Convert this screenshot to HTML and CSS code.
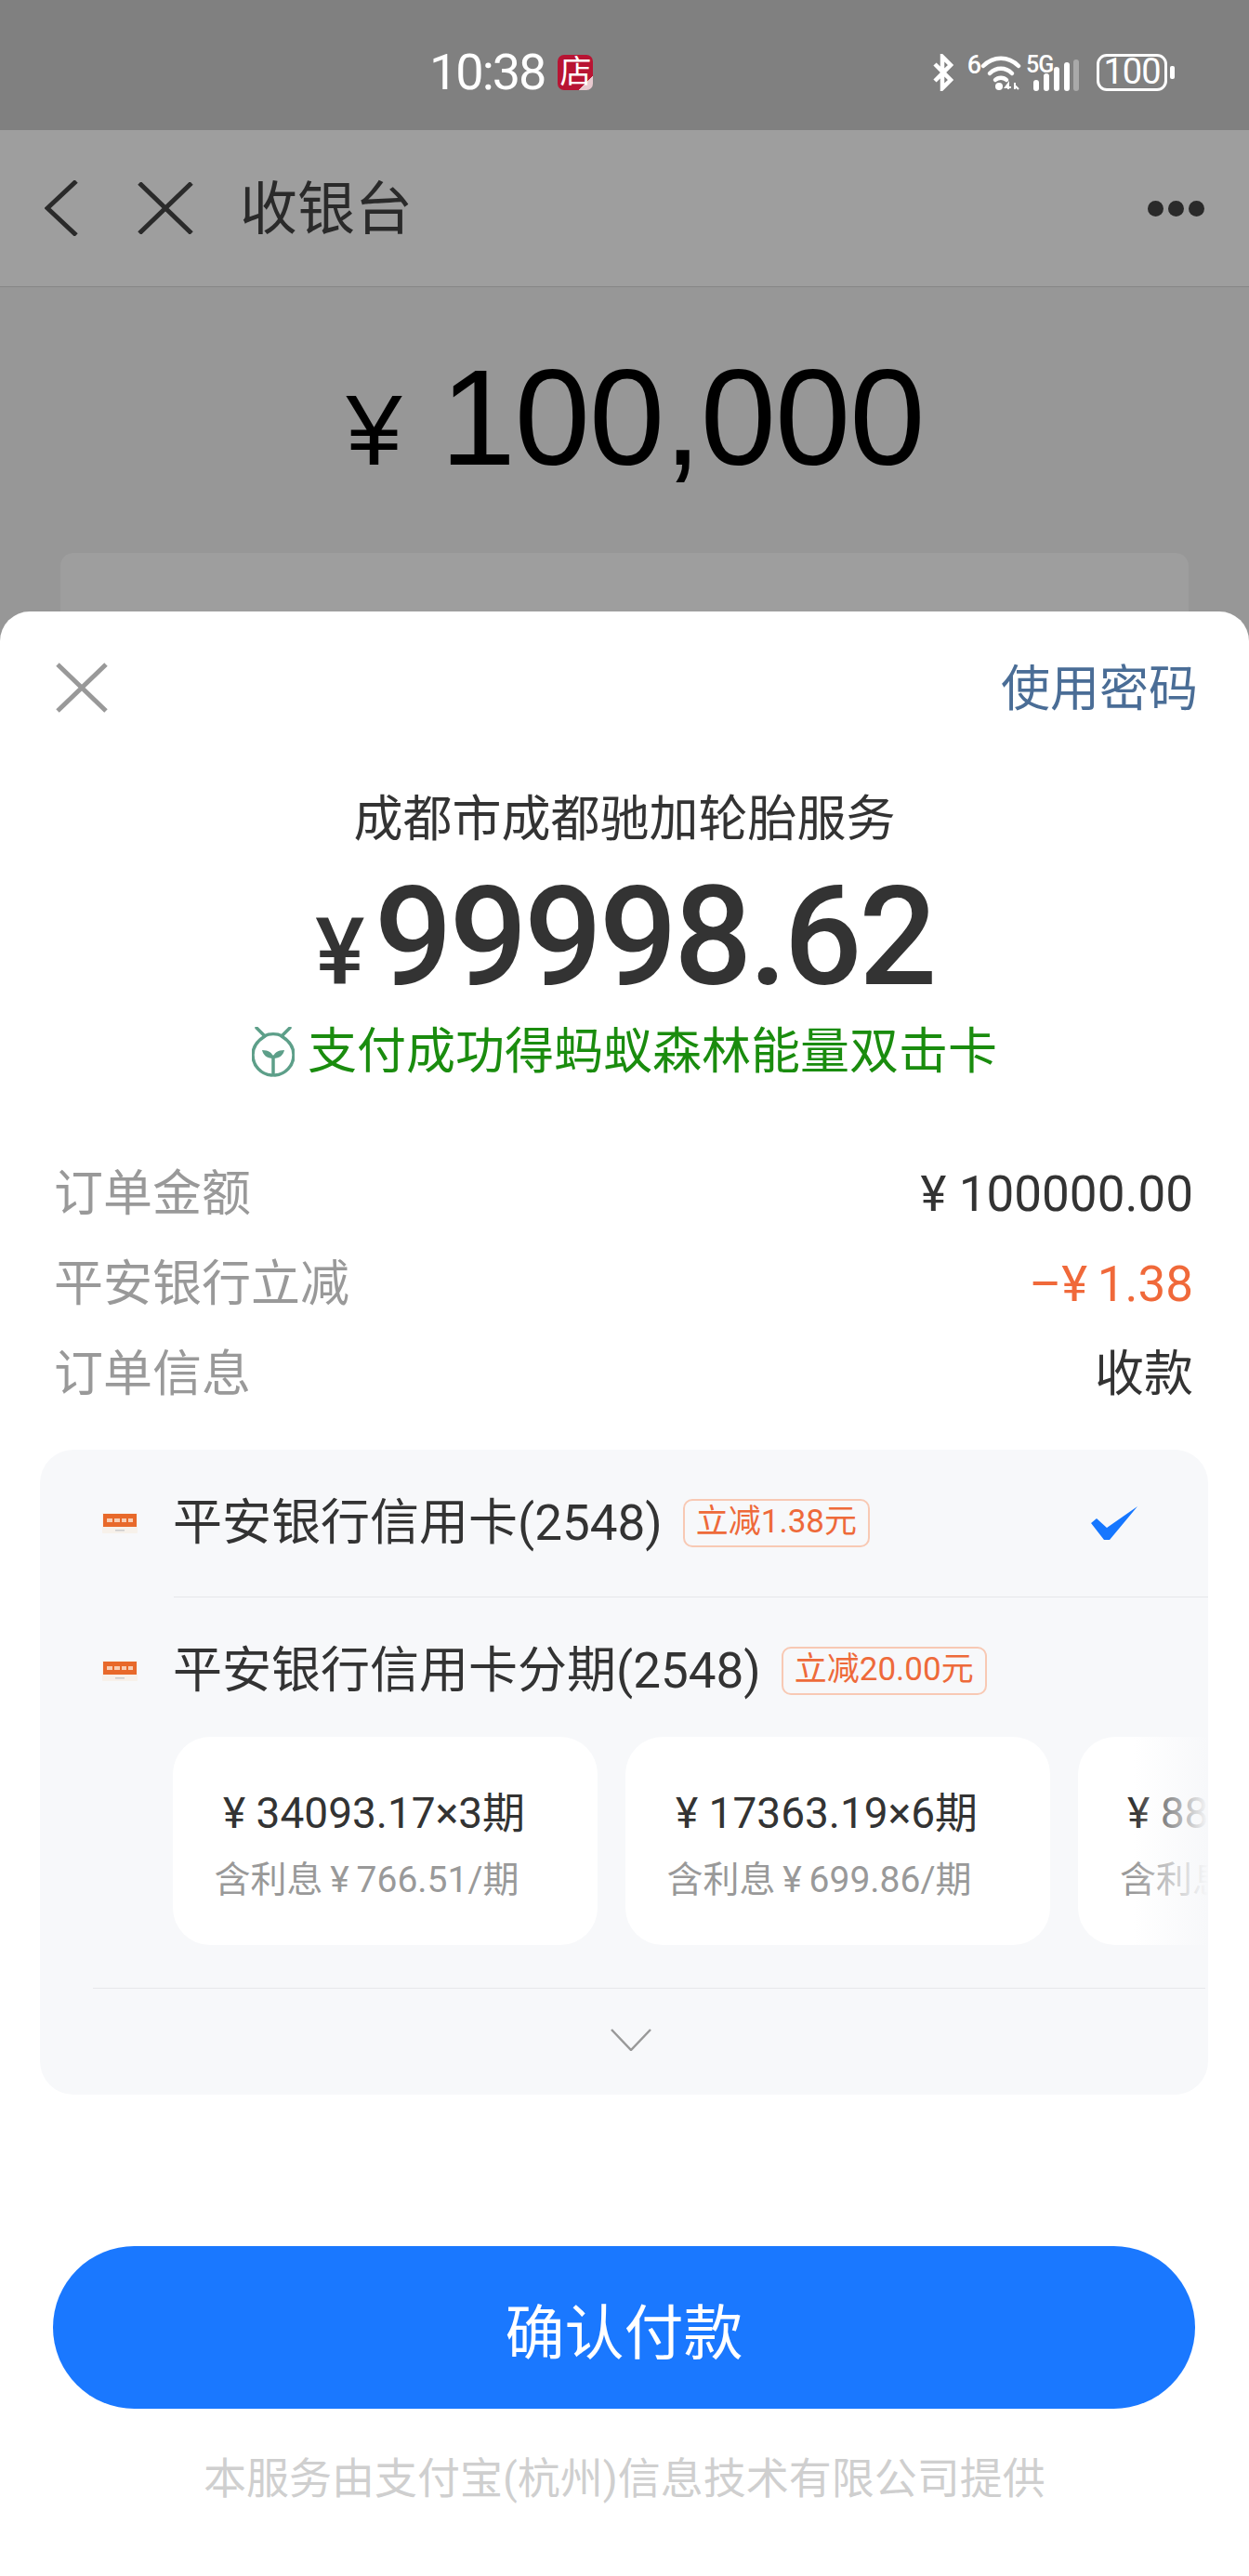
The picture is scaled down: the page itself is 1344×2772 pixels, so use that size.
FILE: index.html
```html
<!DOCTYPE html>
<html lang="zh-CN">
<head>
    <meta charset="UTF-8">
    <title>收银台</title>
    <link rel="stylesheet" href="styles.css">
</head>
<body>
<div class="page">
    <header class="status-bar">
        <div class="status-center">
            <span class="status-time">10:38</span>
            <span class="store-badge">店</span>
        </div>
        <div class="status-icons">
            <svg class="icon-bt" viewBox="0 0 26 40" width="26" height="40"><path d="M4 11 L21 28 L12 37 V3 L21 12 L4 29" fill="none" stroke="#fff" stroke-width="4.5"/></svg>
            <span class="wifi-gen">6</span>
            <svg class="icon-wifi" viewBox="0 0 44 38" width="44" height="38"><g fill="none" stroke="#fff" stroke-width="4.5" stroke-linecap="round"><path d="M3 12 C14 1 30 1 41 12"/><path d="M10 20 C17 13 27 13 34 20"/><path d="M16 27 C19 24 25 24 28 27"/></g><circle cx="20" cy="34" r="4" fill="#fff"/><path d="M30 37 L30 31 L27 35 H33 M37 30 V37 M37 33 L41 37" fill="none" stroke="#fff" stroke-width="2"/></svg>
            <div class="signal">
                <span class="signal-gen">5G</span>
                <svg viewBox="0 0 50 34" width="50" height="34"><g stroke="#fff" stroke-width="6" stroke-linecap="round"><path d="M3 25 V31"/><path d="M14 18 V31"/><path d="M25 11 V31"/><path d="M36 6 V31"/></g><path d="M46 3 V31" stroke="#a9a9a9" stroke-width="6" stroke-linecap="round"/></svg>
            </div>
            <div class="battery"><span class="battery-level">100</span></div>
            <span class="battery-nub"></span>
        </div>
    </header>

    <nav class="top-nav">
        <svg class="nav-back" viewBox="0 0 36 60" width="36" height="60"><path d="M34 1 L3 30 L34 59" fill="none" stroke="#2a2a2a" stroke-width="5"/></svg>
        <svg class="nav-close" viewBox="0 0 60 56" width="60" height="56"><path d="M2 1 L58 55 M58 1 L2 55" fill="none" stroke="#2a2a2a" stroke-width="5"/></svg>
        <span class="nav-title">收银台</span>
        <div class="nav-more"><i></i><i></i><i></i></div>
    </nav>

    <section class="behind">
        <div class="behind-amount"><span class="behind-yen">¥</span><span>100,000</span></div>
        <div class="behind-card"></div>
    </section>

    <div class="sheet">
        <div class="sheet-head">
            <svg viewBox="0 0 56 54" width="56" height="54"><path d="M2 2 L54 52 M54 2 L2 52" fill="none" stroke="#999" stroke-width="5"/></svg>
            <a class="use-password">使用密码</a>
        </div>

        <div class="merchant">成都市成都驰加轮胎服务</div>
        <div class="pay-amount"><span class="pay-yen">¥</span>99998.62</div>
        <div class="forest">
            <svg viewBox="0 0 46 54" width="46" height="54"><g fill="none" stroke="#5d9f89" stroke-width="3.5" stroke-linecap="round"><path d="M14 10 C6 15 1 22 1 30 C1 42 10 51 21 52"/><path d="M32 10 C40 15 45 22 45 30 C45 42 36 51 25 52"/><path d="M13 10 C19 7 27 7 33 10"/><path d="M5 1 L13 9"/><path d="M41 1 L33 9"/><path d="M23 52 V32"/></g><path d="M23 34 C16 34 12 30 11 25 C18 25 23 28 23 34 Z M23 34 C30 34 34 30 35 25 C28 25 23 28 23 34 Z" fill="#5d9f89"/></svg>
            <span>支付成功得蚂蚁森林能量双击卡</span>
        </div>

        <dl class="details">
            <div class="detail-row"><dt>订单金额</dt><dd><span class="yen">¥</span>100000.00</dd></div>
            <div class="detail-row"><dt>平安银行立减</dt><dd class="discount">–¥<span class="yen"></span>1.38</dd></div>
            <div class="detail-row"><dt>订单信息</dt><dd>收款</dd></div>
        </dl>

        <div class="methods">
            <div class="method">
                <svg class="bank-icon" viewBox="0 0 38 22" width="38" height="22"><rect width="38" height="22" rx="1" fill="#f7f1ea"/><rect x="1" y="1" width="36" height="14" fill="#e8692a"/><path d="M5 6 h6 v4 h-6 z M13 6 h6 v4 h-6 z M21 6 h5 v4 h-5 z M28 6 h5 v4 h-5 z" fill="#f8cdb2"/><rect x="14" y="18" width="10" height="1.5" fill="#ccc"/></svg>
                <span class="method-name">平安银行信用卡(2548)</span>
                <span class="promo">立减1.38元</span>
                <svg class="method-check" viewBox="0 0 50 36" width="50" height="36"><path d="M0 18 L6 13 L17 23 L50 0 L20 36 H14 Z" fill="#1677ff"/></svg>
            </div>
            <div class="method-line"></div>
            <div class="method method-plans">
                <svg class="bank-icon" viewBox="0 0 38 22" width="38" height="22"><rect width="38" height="22" rx="1" fill="#f7f1ea"/><rect x="1" y="1" width="36" height="14" fill="#e8692a"/><path d="M5 6 h6 v4 h-6 z M13 6 h6 v4 h-6 z M21 6 h5 v4 h-5 z M28 6 h5 v4 h-5 z" fill="#f8cdb2"/><rect x="14" y="18" width="10" height="1.5" fill="#ccc"/></svg>
                <span class="method-name">平安银行信用卡分期(2548)</span>
                <span class="promo">立减20.00元</span>
            </div>
            <div class="plans">
                <div class="plan">
                    <div class="plan-main"><span class="yen">¥</span>34093.17×3期</div>
                    <div class="plan-sub">含利息<span class="plan-sub-yen">¥</span>766.51/期</div>
                </div>
                <div class="plan">
                    <div class="plan-main"><span class="yen">¥</span>17363.19×6期</div>
                    <div class="plan-sub">含利息<span class="plan-sub-yen">¥</span>699.86/期</div>
                </div>
                <div class="plan plan-clipped">
                    <div class="plan-main"><span class="yen">¥</span>88</div>
                    <div class="plan-sub">含利息</div>
                </div>
                <div class="plans-fade"></div>
            </div>
            <div class="plans-line"></div>
            <div class="methods-more">
                <svg viewBox="0 0 44 24" width="44" height="24"><path d="M1 1 L22 23 L43 1" fill="none" stroke="#999" stroke-width="2.5"/></svg>
            </div>
        </div>

        <button class="confirm">确认付款</button>
        <div class="provider">本服务由支付宝(杭州)信息技术有限公司提供</div>
    </div>
</div>
</body>
</html>
```

FILE: styles.css
```css
* {
    box-sizing: border-box;
}

body {
    font-family: Roboto, "Noto Sans CJK SC", sans-serif;
    margin: 0;
}

.page {
    background: #979797;
    height: 2772px;
    overflow: hidden;
    position: relative;
    width: 1344px;
}

/* status bar */
.status-bar {
    align-items: center;
    background: #808080;
    color: #fff;
    display: flex;
    height: 140px;
    padding: 16px 80px 0 462px;
}

.status-center {
    align-items: center;
    display: flex;
    gap: 14px;
}

.status-time {
    font-size: 54px;
    letter-spacing: -2px;
    line-height: 60px;
}

.store-badge {
    background: linear-gradient(135deg, #b81433 80%, #e8c9cf 80%);
    border-radius: 7px;
    font-size: 34px;
    height: 38px;
    line-height: 36px;
    text-align: center;
    width: 38px;
}

.status-icons {
    align-items: center;
    display: flex;
    margin-left: auto;
    position: relative;
}

.icon-bt {
    margin-right: 13px;
}

.wifi-gen {
    align-self: flex-start;
    font-size: 27px;
    font-weight: 500;
    letter-spacing: -1px;
    line-height: 24px;
}

.signal {
    height: 40px;
    margin-left: 13px;
    position: relative;
    width: 50px;
}

.signal svg {
    bottom: 0;
    left: 0;
    position: absolute;
}

.signal-gen {
    font-size: 25px;
    font-weight: 500;
    left: -8px;
    letter-spacing: -1px;
    line-height: 24px;
    position: absolute;
    top: 0;
}

.battery {
    border: 3.5px solid #fff;
    border-radius: 11px;
    height: 40px;
    margin-left: 18px;
    text-align: center;
    width: 76px;
}

.battery-level {
    display: block;
    font-size: 38px;
    letter-spacing: -1px;
    line-height: 33px;
}

.battery-nub {
    background: #fff;
    border-radius: 2px;
    height: 14px;
    margin-left: 3px;
    width: 5px;
}

/* page behind the sheet */
.top-nav {
    align-items: center;
    background: #9e9e9e;
    border-bottom: 1px solid #868686;
    display: flex;
    height: 169px;
    padding: 0 48px;
}

.nav-close {
    margin-left: 64px;
}

.nav-title {
    color: #2a2a2a;
    font-size: 62px;
    margin-bottom: 9px;
    margin-left: 50px;
}

.nav-more {
    display: flex;
    gap: 5px;
    margin-left: auto;
}

.nav-more i {
    background: #2a2a2a;
    border-radius: 50%;
    height: 17px;
    width: 17px;
}

.behind {
    padding: 56px 65px 0 88px;
}

.behind-amount {
    align-items: baseline;
    color: #000;
    display: flex;
    font-family: "Liberation Sans", sans-serif;
    font-size: 146px;
    justify-content: center;
    letter-spacing: -1px;
    line-height: 170px;
}

.behind-yen {
    font-size: 108px;
    line-height: 1;
    margin-right: 42px;
}

.behind-card {
    background: #9e9e9e;
    border-radius: 14px;
    height: 140px;
    margin: 60px 0 0 -23px;
}

/* payment sheet */
.sheet {
    background: #fff;
    border-radius: 32px 32px 0 0;
    bottom: 0;
    left: 0;
    position: absolute;
    right: 0;
    top: 658px;
}

.sheet-head {
    align-items: center;
    display: flex;
    height: 54px;
    justify-content: space-between;
    margin-top: 55px;
    padding: 0 55px 0 60px;
}

.use-password {
    color: #4a6d96;
    font-size: 53px;
    line-height: 54px;
    margin-top: 4px;
}

.merchant {
    color: #333;
    font-size: 53px;
    line-height: 60px;
    margin-top: 85px;
    text-align: center;
}

.pay-amount {
    color: #333;
    font-size: 148px;
    font-weight: 500;
    height: 130px;
    letter-spacing: -3.5px;
    line-height: 130px;
    margin-top: 32px;
    text-align: center;
}

.pay-yen {
    font-size: 100px;
    line-height: 1;
    margin-right: 14px;
}

.forest {
    align-items: center;
    color: #1a8c0e;
    display: flex;
    font-size: 53px;
    gap: 14px;
    height: 60px;
    justify-content: center;
    line-height: 60px;
    margin-top: 28px;
}

.details {
    margin: 74px 60px 0 58px;
}

.detail-row {
    align-items: center;
    display: flex;
    font-size: 53px;
    height: 97px;
    justify-content: space-between;
    line-height: 60px;
}

.detail-row dt {
    color: #999;
}

.detail-row dd {
    color: #333;
    margin: 0;
}

.detail-row .discount {
    color: #f0693a;
}

.yen {
    margin-right: 0.25em;
}

.discount .yen {
    margin-right: 0.2em;
}

.methods {
    background: #f7f8fa;
    border-radius: 36px;
    height: 694px;
    margin: 33px 44px 0 43px;
    overflow: hidden;
}

.method {
    align-items: center;
    display: flex;
    height: 158px;
    padding-left: 67px;
}

.method-plans {
    align-items: flex-end;
    height: 106px;
    margin-bottom: 44px;
}

.method-plans .bank-icon {
    margin-bottom: 16px;
}

.bank-icon {
    flex: none;
}

.method-name {
    color: #333;
    font-size: 53px;
    line-height: 54px;
    margin-left: 38px;
}

.promo {
    border: 2px solid #f8c9b4;
    border-radius: 10px;
    color: #ee6a3a;
    font-size: 35px;
    height: 52px;
    line-height: 46px;
    margin-left: 22px;
    padding: 0 12px;
}

.method-plans .promo {
    margin-bottom: 1px;
}

.method-check {
    margin-left: auto;
    margin-right: 76px;
}

.method-line {
    background: #e6e7ea;
    height: 1px;
    margin-left: 144px;
}

.plans {
    display: flex;
    gap: 30px;
    margin-left: 143px;
    overflow: hidden;
    position: relative;
}

.plan {
    background: #fff;
    border-radius: 40px;
    flex: none;
    height: 224px;
    padding: 56px 24px 0 0;
    text-align: center;
    width: 457px;
}

.plan-main {
    color: #333;
    font-size: 46px;
    line-height: 52px;
}

.plan-sub {
    color: #999;
    font-size: 39px;
    line-height: 52px;
    margin-top: 20px;
    padding-right: 16px;
}

.plan-sub-yen {
    margin: 0 0.2em;
}

.plan-clipped {
    padding-left: 53px;
    text-align: left;
}

.plan-clipped .plan-sub {
    margin-left: -8px;
}

.plans-fade {
    background: linear-gradient(to right, rgba(247, 248, 250, 0), #f7f8fa);
    bottom: 0;
    position: absolute;
    right: 0;
    top: 0;
    width: 80px;
}

.plans-line {
    background: #e6e7ea;
    height: 1px;
    margin: 46px 3px 0 57px;
}

.methods-more {
    display: flex;
    justify-content: center;
    padding: 43px 0 0 15px;
}

.confirm {
    background: #1a78ff;
    border: 0;
    border-radius: 88px;
    color: #fff;
    display: block;
    font-family: inherit;
    font-size: 64px;
    height: 175px;
    margin: 163px 58px 0 57px;
    padding: 0;
    width: 1229px;
}

.provider {
    color: #cfcfcf;
    font-size: 46px;
    line-height: 60px;
    margin-top: 45px;
    text-align: center;
}
```
